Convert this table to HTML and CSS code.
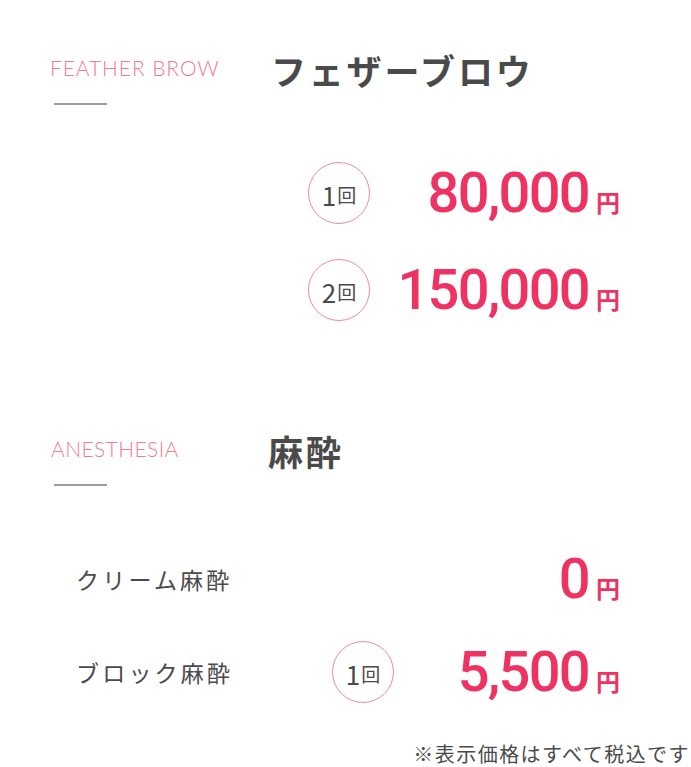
FILE: index.html
```html
<!DOCTYPE html>
<html lang="ja">
<head>
<meta charset="utf-8">
<link rel="stylesheet" href="styles.css">
</head>
<body>
<div class="page">
  <section class="menu menu-brow">
    <div class="menu-head">
      <div class="label">
        <p class="label-en">FEATHER BROW</p>
        <span class="label-line"></span>
      </div>
      <h2 class="title">フェザーブロウ</h2>
    </div>
    <div class="rows">
      <div class="row">
        <span class="count"><span class="count-num">1</span><span class="count-unit">回</span></span>
        <span class="price"><span class="price-num">80,000</span><span class="yen">円</span></span>
      </div>
      <div class="row">
        <span class="count"><span class="count-num">2</span><span class="count-unit">回</span></span>
        <span class="price"><span class="price-num">150,000</span><span class="yen">円</span></span>
      </div>
    </div>
  </section>

  <section class="menu menu-anes">
    <div class="menu-head">
      <div class="label">
        <p class="label-en label-en-narrow">ANESTHESIA</p>
        <span class="label-line"></span>
      </div>
      <h2 class="title">麻酔</h2>
    </div>
    <div class="rows">
      <div class="row">
        <span class="name">クリーム麻酔</span>
        <span class="count count-empty"></span>
        <span class="price"><span class="price-num">0</span><span class="yen">円</span></span>
      </div>
      <div class="row">
        <span class="name">ブロック麻酔</span>
        <span class="count"><span class="count-num">1</span><span class="count-unit">回</span></span>
        <span class="price"><span class="price-num">5,500</span><span class="yen">円</span></span>
      </div>
    </div>
  </section>

  <p class="note">※表示価格はすべて税込です</p>
</div>
</body>
</html>
```

FILE: styles.css
```css
* { box-sizing: border-box; }
html, body { margin: 0; padding: 0; background: #fff; }
body {
  font-family: "Noto Sans CJK JP", "Noto Sans", sans-serif;
  color: #4a4a4a;
}
.page {
  width: 691px;
  padding-top: 46px;
}
.menu-head {
  display: flex;
  align-items: flex-start;
}
.label {
  width: 271px;
  padding-left: 50px;
  display: flex;
  flex-direction: column;
}
.label-en {
  margin: 0;
  font-family: "Lato", sans-serif;
  font-weight: 300;
  font-size: 21px;
  line-height: 44px;
  letter-spacing: 0.9px;
  color: #ef7d93;
}
.label-en-narrow { letter-spacing: 0.4px; padding-left: 1px; }
.label-line {
  display: block;
  width: 53px;
  height: 2px;
  margin: 13px 0 0 4px;
  background: #9c9c9c;
}
.title {
  margin: 0;
  font-size: 35px;
  font-weight: 700;
  line-height: 48px;
  letter-spacing: 2.8px;
  color: #4a4a4a;
}
.menu-anes .title { margin-left: -3px; }

.rows {
  display: flex;
  flex-direction: column;
  gap: 35px;
  padding-right: 71px;
}
.menu-brow .rows { padding-top: 57px; padding-left: 308px; }
.menu-anes .rows { padding-top: 62px; padding-left: 76px; gap: 31px; }

.row {
  display: flex;
  align-items: center;
  height: 62px;
}
.name {
  width: 256px;
  font-size: 23px;
  letter-spacing: 3.2px;
  color: #4a4a4a;
}
.count {
  width: 62px;
  height: 62px;
  border: 1px solid #ee8b9c;
  border-radius: 50%;
  display: flex;
  align-items: center;
  justify-content: center;
  color: #4a4a4a;
  padding-top: 2px;
}
.count-empty { border-color: transparent; }
.count-num {
  font-family: "Noto Sans CJK JP", sans-serif;
  font-size: 26px;
  font-weight: 400;
}
.count-unit {
  font-size: 19px;
  margin-left: 1px;
}
.price {
  flex: 1;
  display: flex;
  justify-content: flex-end;
  align-items: baseline;
  color: #ee3362;
}
.price-num {
  font-family: "Roboto", sans-serif;
  font-weight: 500;
  font-size: 56px;
  letter-spacing: -1.7px;
  line-height: 1;
}
.yen {
  font-size: 24px;
  font-weight: 700;
  margin-left: 7px;
}
.menu-anes { padding-top: 106px; }
.note {
  margin: 39px 0 0;
  padding-right: 1px;
  text-align: right;
  font-size: 20px;
  line-height: 24px;
  letter-spacing: 1.45px;
  color: #4a4a4a;
}
```
